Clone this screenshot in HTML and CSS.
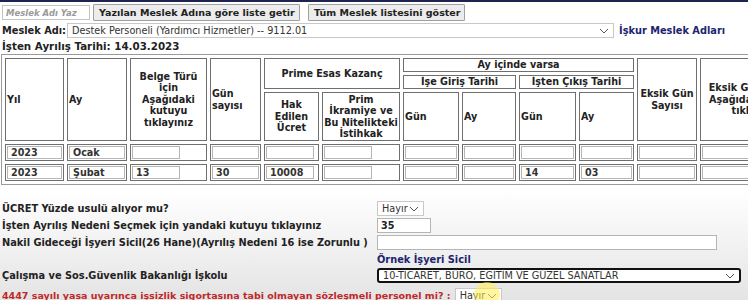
FILE: index.html
```html
<!DOCTYPE html>
<html lang="tr">
  <head>
    <meta charset="UTF-8" />
    <title>İşten Ayrılış Bildirgesi</title>
    <link rel="stylesheet" href="styles.css">
  </head>
  <body>
    <div class="topbar"></div>

    <div class="search-row">
      <input class="search-input" type="text" placeholder="Meslek Adı Yaz">
      <button class="btn btn-list">Yazılan Meslek Adına göre liste getir</button>
      <button class="btn btn-all">Tüm Meslek listesini göster</button>
    </div>

    <div class="meslek-row">
      <span class="label">Meslek Adı:</span>
      <div class="select meslek-select">
        <span>Destek Personeli (Yardımcı Hizmetler) -- 9112.01</span>
        <svg class="chev" width="10" height="6" viewBox="0 0 10 6"><path d="M1 1 L5 5 L9 1" fill="none" stroke="#555" stroke-width="1"/></svg>
      </div>
      <a class="link" href="#">İşkur Meslek Adları</a>
    </div>

    <div class="date-row">İşten Ayrılış Tarihi: 14.03.2023</div>

    <table class="grid">
      <colgroup>
        <col style="width:59px"><col style="width:60px"><col style="width:77px"><col style="width:51px">
        <col style="width:55px"><col style="width:78px"><col style="width:56px"><col style="width:54px">
        <col style="width:57px"><col style="width:55px"><col style="width:60px"><col style="width:112px">
      </colgroup>
      <tr class="h1">
        <th rowspan="3" class="left">Yıl</th>
        <th rowspan="3" class="left">Ay</th>
        <th rowspan="3">Belge Türü<br>için<br>Aşağıdaki<br>kutuyu<br>tıklayınız</th>
        <th rowspan="3" class="left">Gün<br>sayısı</th>
        <th rowspan="2" colspan="2">Prime Esas Kazanç</th>
        <th colspan="4">Ay içinde varsa</th>
        <th rowspan="3">Eksik Gün<br>Sayısı</th>
        <th rowspan="3">Eksik Gün Nedeni<br>Aşağıdaki kutuyu<br>tıklayınız</th>
      </tr>
      <tr class="h2">
        <th colspan="2">İşe Giriş Tarihi</th>
        <th colspan="2">İşten Çıkış Tarihi</th>
      </tr>
      <tr class="h3">
        <th>Hak<br>Edilen<br>Ücret</th>
        <th>Prim<br>İkramiye ve<br>Bu Nitelikteki<br>İstihkak</th>
        <th class="left">Gün</th>
        <th class="left">Ay</th>
        <th class="left">Gün</th>
        <th class="left">Ay</th>
      </tr>
      <tr class="data">
        <td><input class="cell-in" value="2023"></td>
        <td><input class="cell-in" value="Ocak"></td>
        <td><input class="cell-in short" value=""></td>
        <td><input class="cell-in" value=""></td>
        <td><input class="cell-in mid" value=""></td>
        <td><input class="cell-in short" value=""></td>
        <td><input class="cell-in" value=""></td>
        <td><input class="cell-in" value=""></td>
        <td><input class="cell-in" value=""></td>
        <td><input class="cell-in" value=""></td>
        <td><input class="cell-in" value=""></td>
        <td><input class="cell-in" value=""></td>
      </tr>
      <tr class="data">
        <td><input class="cell-in" value="2023"></td>
        <td><input class="cell-in" value="Şubat"></td>
        <td><input class="cell-in short" value="13"></td>
        <td><input class="cell-in" value="30"></td>
        <td><input class="cell-in mid" value="10008"></td>
        <td><input class="cell-in short" value=""></td>
        <td><input class="cell-in" value=""></td>
        <td><input class="cell-in" value=""></td>
        <td><input class="cell-in" value="14"></td>
        <td><input class="cell-in" value="03"></td>
        <td><input class="cell-in" value=""></td>
        <td><input class="cell-in" value=""></td>
      </tr>
    </table>

    <div class="form-grid">
      <div class="f-label">ÜCRET Yüzde usulü alıyor mu?</div>
      <div class="f-field">
        <div class="select small-select">
          <span>Hayır</span>
          <svg class="chev" width="10" height="6" viewBox="0 0 10 6"><path d="M1 1 L5 5 L9 1" fill="none" stroke="#555" stroke-width="1"/></svg>
        </div>
      </div>

      <div class="f-label">İşten Ayrılış Nedeni Seçmek için yandaki kutuyu tıklayınız</div>
      <div class="f-field"><input class="text-in reason-in" value="35"></div>

      <div class="f-label">Nakil Gideceği İşyeri Sicil(26 Hane)(Ayrılış Nedeni 16 ise Zorunlu )</div>
      <div class="f-field"><input class="text-in sicil-in" value=""></div>

      <div class="f-label link-row"></div>
      <div class="f-field link-row"><a class="link" href="#">Örnek İşyeri Sicil</a></div>

      <div class="f-label">Çalışma ve Sos.Güvenlik Bakanlığı İşkolu</div>
      <div class="f-field">
        <div class="select isk-select">
          <span>10-TİCARET, BÜRO, EĞİTİM VE GÜZEL SANATLAR</span>
          <svg class="chev" width="10" height="6" viewBox="0 0 10 6"><path d="M1 1 L5 5 L9 1" fill="none" stroke="#555" stroke-width="1"/></svg>
        </div>
      </div>

      <div class="f-wide">
        <span class="warn">4447 sayılı yasa uyarınca işsizlik sigortasına tabi olmayan sözleşmeli personel mi? :</span>
        <div class="select small-select">
          <span>Hayır</span>
          <svg class="chev" width="10" height="6" viewBox="0 0 10 6"><path d="M1 1 L5 5 L9 1" fill="none" stroke="#555" stroke-width="1"/></svg>
        </div>
        <div class="cursor-glow"></div>
      </div>
    </div>
  </body>
</html>
```

FILE: styles.css
```css
html, body {
  overflow: hidden;
}

body {
  margin: 0;
  padding: 0 2px;
  height: 300px;
  font-family: "DejaVu Sans", Verdana, sans-serif;
  font-size: 10px;
  color: #222;
  background: linear-gradient(to bottom, #fff 0, #fff 190px, #e4e4e4 300px);
}

.topbar {
  height: 2px;
  margin: 0 -2px;
  background: #1d2452;
}

.search-row {
  display: flex;
  align-items: center;
  gap: 3px;
  margin-top: 2px;
  height: 17px;
}

.search-input {
  box-sizing: border-box;
  width: 88px;
  height: 15px;
  padding: 0 3px;
  border: 1px solid #c4c4c4;
  font-family: inherit;
  font-size: 8.5px;
}

.search-input::placeholder {
  color: #9a9a9a;
  font-style: italic;
  font-weight: bold;
}

.btn {
  box-sizing: border-box;
  height: 17px;
  padding: 0 5px;
  border: 1px solid #a0a0a0;
  border-radius: 1px;
  background: #ececec;
  color: #222;
  font-family: inherit;
  font-size: 9.5px;
  font-weight: bold;
  white-space: nowrap;
}

.btn-list {
  width: 207px;
}

.btn-all {
  width: 157px;
  margin-left: 5px;
}

.meslek-row {
  display: flex;
  align-items: center;
  height: 15px;
  margin-top: 2px;
}

.label {
  flex: none;
  width: 65px;
  font-weight: bold;
  font-size: 9.8px;
  white-space: nowrap;
}

.select {
  box-sizing: border-box;
  display: flex;
  align-items: center;
  justify-content: space-between;
  flex: none;
  height: 15px;
  padding: 0 4px;
  border: 1px solid #c8c8c8;
  background: #fff;
  font-size: 9.7px;
  font-weight: normal;
  color: #333;
  white-space: nowrap;
}

.meslek-select {
  width: 547px;
}

.link {
  color: #1d2470;
  font-weight: bold;
  text-decoration: none;
  font-size: 9.8px;
  white-space: nowrap;
}

.meslek-row .link {
  margin-left: 5px;
}

.date-row {
  font-weight: bold;
  font-size: 10.3px;
  height: 14px;
  line-height: 14px;
  margin-top: 1px;
}

.grid {
  table-layout: fixed;
  border-collapse: separate;
  border-spacing: 3px;
  border: 1px solid #9a9a9a;
  margin-top: 1px;
  margin-left: -1px;
  width: 789px;
}

.grid th,
.grid td {
  box-sizing: border-box;
  border: 1px solid #6f6f6f;
  padding: 0 1px;
  font-size: 9.6px;
  line-height: 11.5px;
  overflow: hidden;
  white-space: nowrap;
}

.grid th {
  text-align: center;
  vertical-align: middle;
}

.grid th.left {
  text-align: left;
}

.grid .h1,
.grid .h2 {
  height: 14px;
}

.grid .h3 {
  height: 49px;
}

.grid .data {
  height: 17px;
}

.grid td {
  padding: 1px;
}

.cell-in {
  box-sizing: border-box;
  display: block;
  width: 100%;
  height: 13px;
  padding: 0 3px;
  border: 1px solid #b5b5b5;
  font-family: inherit;
  font-size: 9.6px;
  font-weight: bold;
  color: #333;
}

.cell-in.short,
.cell-in.mid {
  width: 48px;
}

.form-grid {
  display: grid;
  grid-template-columns: 375px 1fr;
  margin-top: 16px;
  font-weight: bold;
  font-size: 9.8px;
}

.f-label,
.f-field {
  display: flex;
  align-items: center;
  min-height: 15px;
  margin-bottom: 2px;
  white-space: nowrap;
}

.f-label.link-row,
.f-field.link-row {
  min-height: 14px;
}

.f-wide {
  grid-column: 1 / 3;
  position: relative;
  display: flex;
  align-items: center;
  gap: 4px;
  margin-top: 3px;
  white-space: nowrap;
}

.small-select {
  width: 47px;
}

.text-in {
  box-sizing: border-box;
  height: 15px;
  padding: 0 3px;
  border: 1px solid #b5b5b5;
  font-family: inherit;
  font-size: 9.6px;
  font-weight: bold;
  color: #222;
}

.reason-in {
  width: 54px;
}

.sicil-in {
  width: 340px;
}

.isk-select {
  width: 364px;
  border: 2px solid #111;
  border-radius: 3px;
}

.warn {
  color: #c0282a;
  font-size: 9.5px;
}

.cursor-glow {
  position: absolute;
  left: 472px;
  top: -6px;
  width: 26px;
  height: 26px;
  border-radius: 50%;
  background: rgba(255, 238, 80, 0.55);
}
```
